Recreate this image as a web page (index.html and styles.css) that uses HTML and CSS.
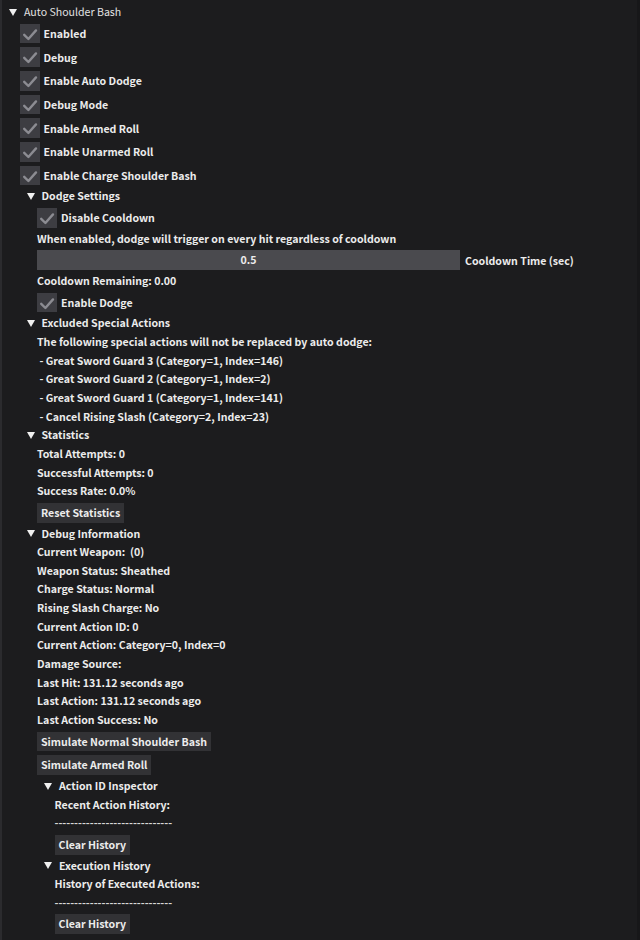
FILE: index.html
```html
<!DOCTYPE html>
<html>
<head>
<meta charset="utf-8">
<link rel="stylesheet" href="styles.css">
</head>
<body>
<div class="win">
  <div class="node">
    <div class="head title"><span class="arrow"></span><span class="lbl">Auto Shoulder Bash</span></div>
    <div class="body">
      <div class="cb"><span class="box"><svg viewBox="0 0 20 20"><path d="M4.2 10.8 L8.4 15 L16 6.4"/></svg></span><span>Enabled</span></div>
      <div class="cb"><span class="box"><svg viewBox="0 0 20 20"><path d="M4.2 10.8 L8.4 15 L16 6.4"/></svg></span><span>Debug</span></div>
      <div class="cb"><span class="box"><svg viewBox="0 0 20 20"><path d="M4.2 10.8 L8.4 15 L16 6.4"/></svg></span><span>Enable Auto Dodge</span></div>
      <div class="cb"><span class="box"><svg viewBox="0 0 20 20"><path d="M4.2 10.8 L8.4 15 L16 6.4"/></svg></span><span>Debug Mode</span></div>
      <div class="cb"><span class="box"><svg viewBox="0 0 20 20"><path d="M4.2 10.8 L8.4 15 L16 6.4"/></svg></span><span>Enable Armed Roll</span></div>
      <div class="cb"><span class="box"><svg viewBox="0 0 20 20"><path d="M4.2 10.8 L8.4 15 L16 6.4"/></svg></span><span>Enable Unarmed Roll</span></div>
      <div class="cb"><span class="box"><svg viewBox="0 0 20 20"><path d="M4.2 10.8 L8.4 15 L16 6.4"/></svg></span><span>Enable Charge Shoulder Bash</span></div>

      <div class="node">
        <div class="head"><span class="arrow"></span><span class="lbl">Dodge Settings</span></div>
        <div class="body">
          <div class="cb"><span class="box"><svg viewBox="0 0 20 20"><path d="M4.2 10.8 L8.4 15 L16 6.4"/></svg></span><span>Disable Cooldown</span></div>
          <div class="txt">When enabled, dodge will trigger on every hit regardless of cooldown</div>
          <div class="slider-row"><div class="slider">0.5</div><span class="slabel">Cooldown Time (sec)</span></div>
          <div class="txt">Cooldown Remaining: 0.00</div>
          <div class="cb"><span class="box"><svg viewBox="0 0 20 20"><path d="M4.2 10.8 L8.4 15 L16 6.4"/></svg></span><span>Enable Dodge</span></div>
        </div>
      </div>

      <div class="node">
        <div class="head"><span class="arrow"></span><span class="lbl">Excluded Special Actions</span></div>
        <div class="body">
          <div class="txt">The following special actions will not be replaced by auto dodge:</div>
          <div class="txt">&nbsp;- Great Sword Guard 3 (Category=1, Index=146)</div>
          <div class="txt">&nbsp;- Great Sword Guard 2 (Category=1, Index=2)</div>
          <div class="txt">&nbsp;- Great Sword Guard 1 (Category=1, Index=141)</div>
          <div class="txt">&nbsp;- Cancel Rising Slash (Category=2, Index=23)</div>
        </div>
      </div>

      <div class="node">
        <div class="head"><span class="arrow"></span><span class="lbl">Statistics</span></div>
        <div class="body">
          <div class="txt">Total Attempts: 0</div>
          <div class="txt">Successful Attempts: 0</div>
          <div class="txt">Success Rate: 0.0%</div>
          <div class="btn-row"><span class="btn">Reset Statistics</span></div>
        </div>
      </div>

      <div class="node">
        <div class="head"><span class="arrow"></span><span class="lbl">Debug Information</span></div>
        <div class="body">
          <div class="txt">Current Weapon:&nbsp; (0)</div>
          <div class="txt">Weapon Status: Sheathed</div>
          <div class="txt">Charge Status: Normal</div>
          <div class="txt">Rising Slash Charge: No</div>
          <div class="txt">Current Action ID: 0</div>
          <div class="txt">Current Action: Category=0, Index=0</div>
          <div class="txt">Damage Source: </div>
          <div class="txt">Last Hit: 131.12 seconds ago</div>
          <div class="txt">Last Action: 131.12 seconds ago</div>
          <div class="txt">Last Action Success: No</div>
          <div class="btn-row"><span class="btn">Simulate Normal Shoulder Bash</span></div>
          <div class="btn-row"><span class="btn">Simulate Armed Roll</span></div>

          <div class="node">
            <div class="head"><span class="arrow"></span><span class="lbl">Action ID Inspector</span></div>
            <div class="body">
              <div class="txt">Recent Action History:</div>
              <div class="txt dash">------------------------------</div>
              <div class="btn-row"><span class="btn">Clear History</span></div>
            </div>
          </div>

          <div class="node">
            <div class="head"><span class="arrow"></span><span class="lbl">Execution History</span></div>
            <div class="body">
              <div class="txt">History of Executed Actions:</div>
              <div class="txt dash">------------------------------</div>
              <div class="btn-row"><span class="btn">Clear History</span></div>
            </div>
          </div>
        </div>
      </div>
    </div>
  </div>
</div>
</body>
</html>
```

FILE: styles.css
```css
html, body {
  margin: 0;
  padding: 0;
  background: #1c1c1e;
}
body {
  width: 640px;
  height: 940px;
  overflow: hidden;
  font-family: "Noto Sans CJK JP", "Noto Sans", sans-serif;
  font-weight: 700;
  font-size: 10.6px;
  color: #ececec;
}
.win {
  box-sizing: border-box;
  height: 940px;
  border-left: 2px solid #2b2b2e;
  border-right: 3px solid #171719;
  padding-top: 5px;
}
.node {
  display: flex;
  flex-direction: column;
  gap: 4px;
}
.head {
  height: 14.65px;
  line-height: 14.65px;
  display: flex;
  align-items: center;
  white-space: nowrap;
}
.head.title .lbl {
  font-weight: 400;
  color: #e2e2e2;
}
.arrow {
  width: 0;
  height: 0;
  margin-left: 7px;
  border-left: 4px solid transparent;
  border-right: 4px solid transparent;
  border-top: 7px solid #f0f0f0;
}
.lbl {
  margin-left: 7px;
}
.body {
  display: flex;
  flex-direction: column;
  gap: 4px;
  padding-left: 17.5px;
}
.txt {
  height: 14.65px;
  line-height: 14.65px;
  white-space: nowrap;
}
.dash {
  color: #d8d8d8;
}
.cb {
  height: 19.7px;
  display: flex;
  align-items: center;
  gap: 4px;
  white-space: nowrap;
}
.box {
  width: 20px;
  height: 19.7px;
  background: #3d3d42;
  display: flex;
}
.box svg {
  width: 20px;
  height: 20px;
  fill: none;
  stroke: #8c8c92;
  stroke-width: 2.4;
  stroke-linecap: round;
  stroke-linejoin: round;
}
.slider-row {
  height: 19.7px;
  display: flex;
  align-items: center;
  gap: 5px;
}
.slider {
  width: 423px;
  height: 19.7px;
  line-height: 19.7px;
  background: #4a4a4e;
  text-align: center;
}
.btn-row {
  display: flex;
}
.btn {
  height: 19.7px;
  line-height: 19.7px;
  padding: 0 4px;
  background: #323235;
  white-space: nowrap;
}
```
